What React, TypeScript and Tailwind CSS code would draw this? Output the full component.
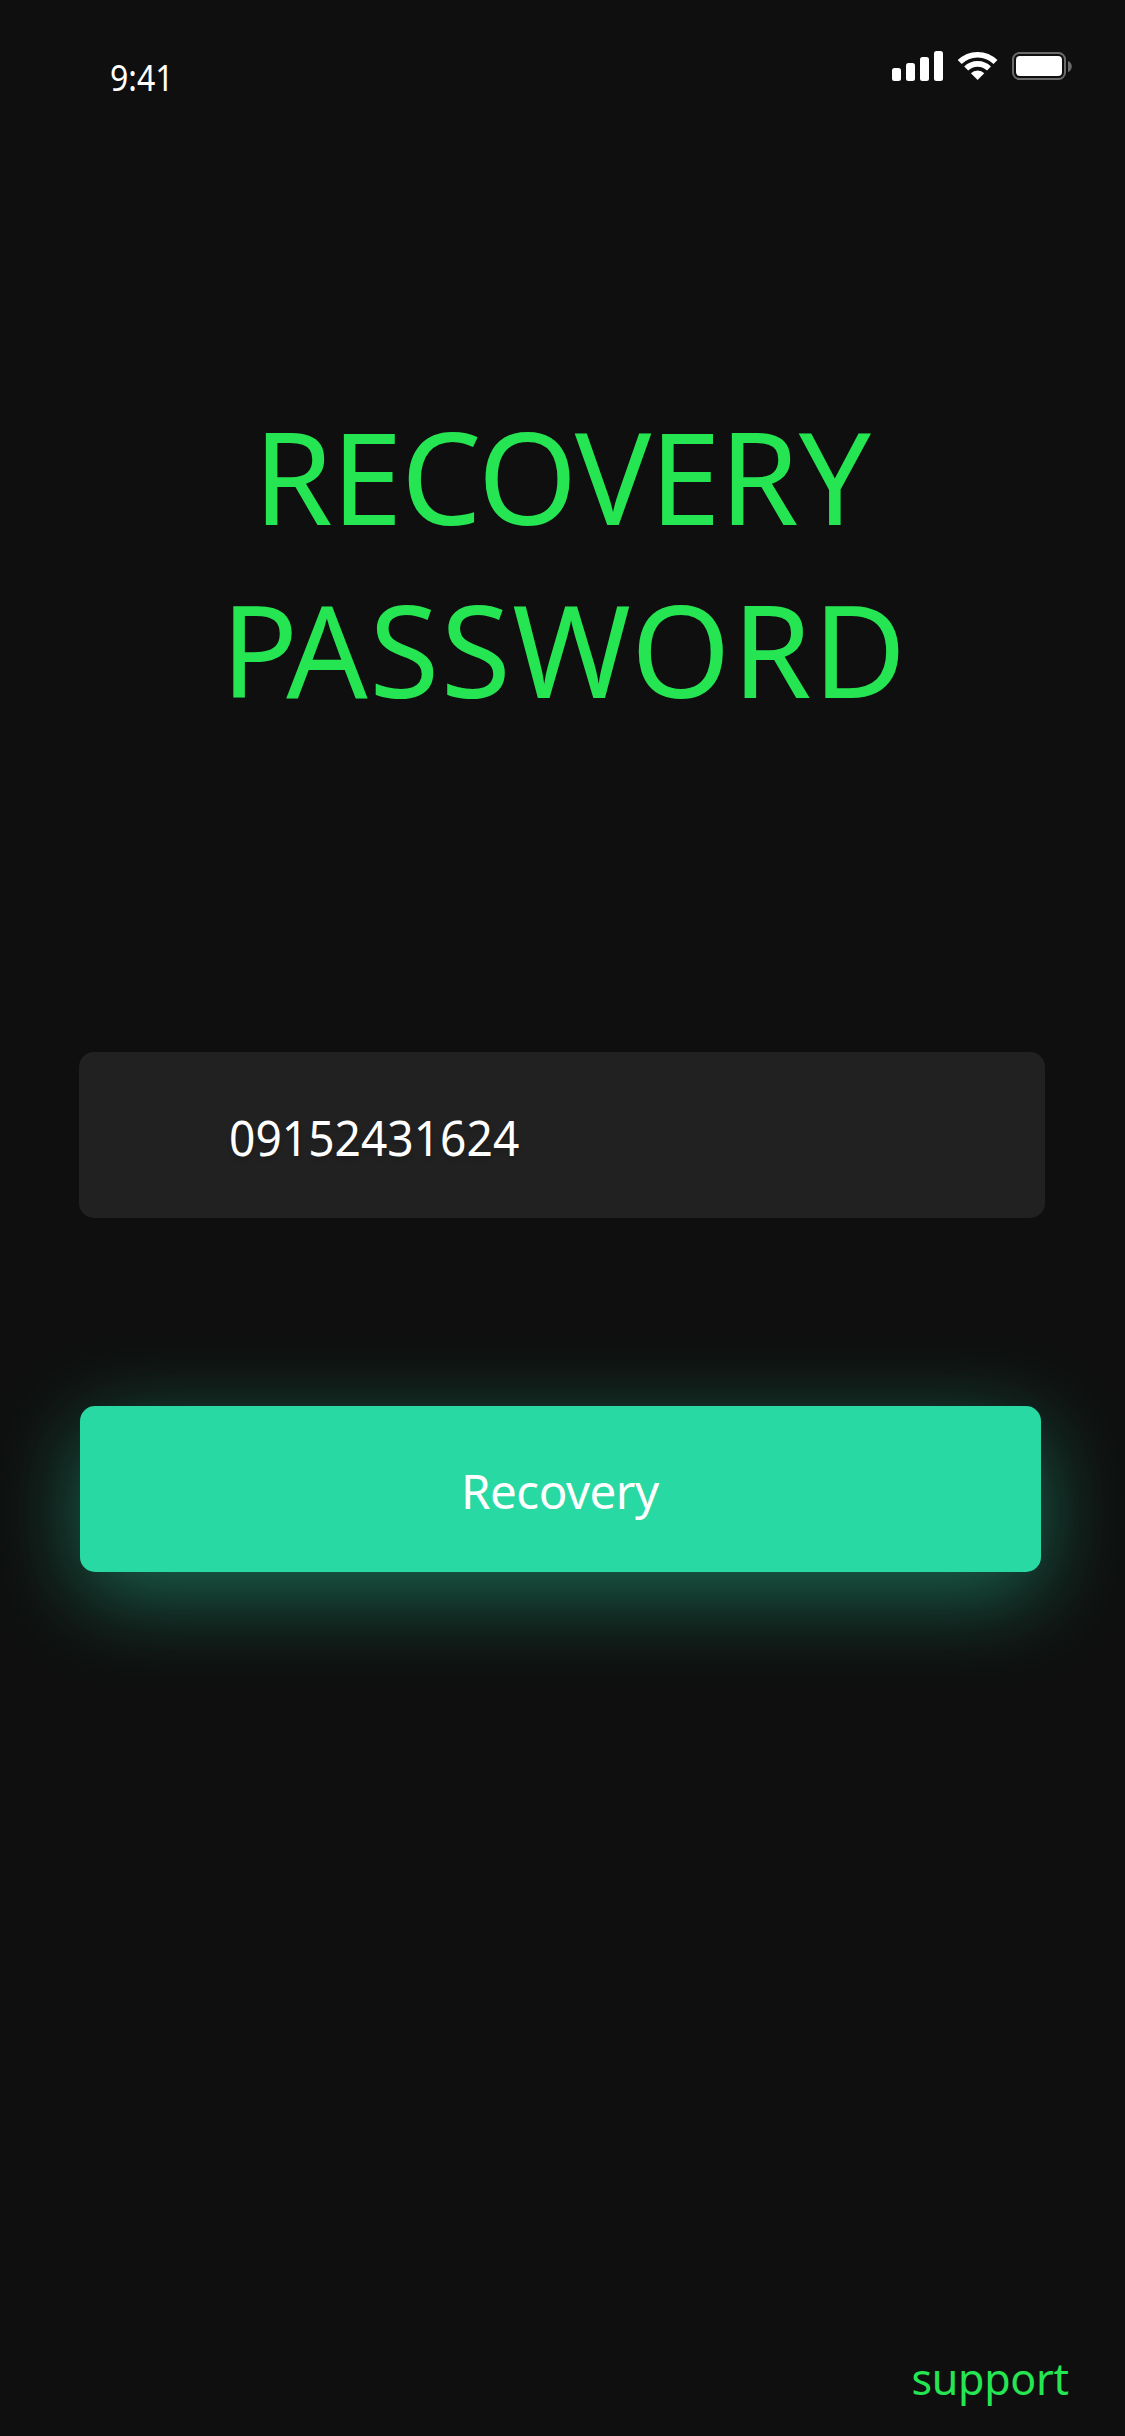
function StatusIcons() {
  return (
    <svg width="184" height="36" viewBox="888 48 184 36" fill="none" aria-hidden="true">
      <g fill="#fff">
        <rect x="892" y="68" width="9" height="13" rx="2.5" />
        <rect x="906" y="63" width="9" height="18" rx="2.5" />
        <rect x="920" y="57" width="9" height="24" rx="2.5" />
        <rect x="934" y="51" width="9" height="30" rx="2.5" />
        <path d="M977.6 80 L970.9 73.3 A9.5 9.5 0 0 1 984.3 73.3 Z" />
      </g>
      <g stroke="#fff" strokeWidth="5.6">
        <path d="M959.7 62.1 A25.3 25.3 0 0 1 995.5 62.1" />
        <path d="M966.2 68.6 A16.1 16.1 0 0 1 989 68.6" />
      </g>
      <rect x="1013" y="53" width="52" height="26" rx="6.5" stroke="#6b6b6b" strokeWidth="2" />
      <rect x="1016" y="56" width="46" height="20" rx="4" fill="#fff" />
      <path d="M1068 61 C1073 62.5 1073 70.5 1068 72 Z" fill="#6b6b6b" />
    </svg>
  );
}

export default function App() {
  return (
    <div className="flex h-[2436px] w-[1125px] flex-col overflow-hidden bg-[#0f0f0f] font-['Noto_Sans',sans-serif] text-white">
      <header className="flex h-[389px] shrink-0 items-start justify-between pl-[109.5px] pr-[53px]">
        <span className="origin-left scale-x-[0.865] pt-[52px] text-[37px] leading-[50px]">9:41</span>
        <div className="pt-12">
          <StatusIcons />
        </div>
      </header>

      <main className="flex grow flex-col">
        <h1 className="flex flex-col text-[127.5px] leading-[173px] text-[#26e552]">
          <span className="pl-[253.6px] tracking-[-1.35px]">
            RECOVE<span className="tracking-[0px]">RY</span>
          </span>
          <span className="pl-[221px] tracking-[1.5px]">
            <span className="tracking-[-11.8px]">P</span>ASSWORD
          </span>
        </h1>

        <div className="ml-[79px] mt-[317px] flex h-[166px] w-[966px] items-start rounded-[15px] bg-[#212121] pl-[150px] pt-[51px]">
          <span className="origin-left scale-x-[0.932] text-[49.5px] leading-[68px] [text-shadow:0_3px_6px_rgba(0,0,0,0.16)]">
            09152431624
          </span>
        </div>

        <button className="ml-[80px] mt-[188px] flex h-[166px] w-[961px] items-start rounded-[15px] bg-[#28d9a3] pl-[381px] pt-[52px] shadow-[0_23px_90px_rgba(40,217,163,0.45)]">
          <span className="text-[47.5px] leading-[66px] tracking-[-0.5px]">Recovery</span>
        </button>
      </main>

      <footer className="flex pb-[27px] pl-[911.5px]">
        <a className="text-[43px] leading-[60px] tracking-[-0.3px] text-[#26e552]">support</a>
      </footer>
    </div>
  );
}
